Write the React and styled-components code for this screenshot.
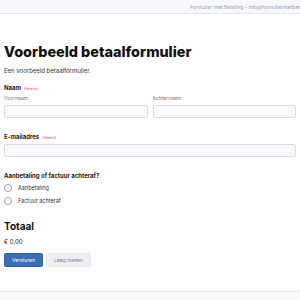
import styled, { createGlobalStyle } from "styled-components";

const GlobalStyle = createGlobalStyle`
  html, body {
    margin: 0;
    padding: 0;
    background: #ffffff;
    font-family: Inter, "Open Sans", sans-serif;
    color: #1a1a1a;
  }
  * { box-sizing: border-box; }
`;

const Page = styled.div`
  width: 300px;
  height: 300px;
  overflow: hidden;
  display: flex;
  flex-direction: column;
`;

const TopBar = styled.header`
  height: 14px;
  flex-shrink: 0;
  background: #f7f8fb;
  border-bottom: 1px solid #e3e6ec;
  display: flex;
  align-items: center;
  padding-left: 190px;
  white-space: nowrap;
  overflow: hidden;
  font-size: 5px;
  color: #9aa3b2;
`;

const Main = styled.main`
  flex: 1;
  padding: 28px 4px 0 4px;
`;

const Title = styled.h1`
  margin: 0;
  font-size: 14.4px;
  font-weight: 800;
  color: #111;
  line-height: 19px;
`;

const Intro = styled.p`
  margin: 6px 0 0 0;
  font-size: 6px;
  color: #333;
`;

const Field = styled.section`
  margin-top: ${(p) => p.$top || 11}px;
`;

const Label = styled.div`
  font-size: 6px;
  font-weight: 700;
  color: #222;
  display: flex;
  align-items: baseline;
  gap: 3px;
`;

const Required = styled.span`
  font-size: 3.5px;
  font-weight: 400;
  color: #d0368a;
`;

const Row = styled.div`
  display: grid;
  grid-template-columns: 1fr 1fr;
  gap: 5px;
  margin-top: 4px;
`;

const Sub = styled.div`
  font-size: 5px;
  color: #777;
  margin-bottom: 4px;
`;

const Input = styled.div`
  height: 13px;
  background: #f8f9fc;
  border: 1px solid #d8dce5;
  border-radius: 2px;
  margin-top: ${(p) => p.$top || 0}px;
`;

const Radio = styled.label`
  display: flex;
  align-items: center;
  gap: 6px;
  font-size: 5.5px;
  color: #333;
  margin-top: ${(p) => p.$top || 0}px;
`;

const Circle = styled.span`
  width: 8px;
  height: 8px;
  border-radius: 50%;
  border: 1px solid #9ca3af;
  background: #fff;
`;

const Total = styled.h2`
  margin: 15px 0 0 0;
  font-size: 10px;
  font-weight: 700;
  color: #111;
`;

const Amount = styled.div`
  margin-top: 6px;
  font-size: 6px;
  color: #222;
`;

const Buttons = styled.div`
  display: flex;
  gap: 3px;
  margin-top: 8px;
`;

const Button = styled.button`
  height: 14px;
  padding: 0 5px;
  font-family: inherit;
  font-size: 5px;
  border-radius: 1.5px;
  border: 1px solid ${(p) => (p.$primary ? "#2f64a8" : "#e6e9ef")};
  background: ${(p) => (p.$primary ? "#3b6fb3" : "#eceff4")};
  color: ${(p) => (p.$primary ? "#fff" : "#7b8290")};
  width: ${(p) => p.$w}px;
`;

const Footer = styled.footer`
  height: 9px;
  flex-shrink: 0;
  background: #f7f8fb;
  border-top: 1px solid #e3e6ec;
`;

export default function App() {
  return (
    <Page>
      <GlobalStyle />
      <TopBar>Formulier met Betaling – info@formuliermetbetaling.nl</TopBar>
      <Main>
        <Title>Voorbeeld betaalformulier</Title>
        <Intro>Een voorbeeld betaalformulier.</Intro>

        <Field $top={10}>
          <Label>
            Naam <Required>(Vereist)</Required>
          </Label>
          <Row>
            <div>
              <Sub>Voornaam</Sub>
              <Input />
            </div>
            <div>
              <Sub>Achternaam</Sub>
              <Input />
            </div>
          </Row>
        </Field>

        <Field $top={15}>
          <Label>
            E-mailadres <Required>(Vereist)</Required>
          </Label>
          <Input $top={4} />
        </Field>

        <Field $top={15}>
          <Label>Aanbetaling of factuur achteraf?</Label>
          <Radio $top={5}>
            <Circle />
            Aanbetaling
          </Radio>
          <Radio $top={5}>
            <Circle />
            Factuur achteraf
          </Radio>
        </Field>

        <Total>Totaal</Total>
        <Amount>€ 0,00</Amount>
        <Buttons>
          <Button $primary $w={39}>Versturen</Button>
          <Button $w={45}>Leeg maken</Button>
        </Buttons>
      </Main>
      <Footer />
    </Page>
  );
}
